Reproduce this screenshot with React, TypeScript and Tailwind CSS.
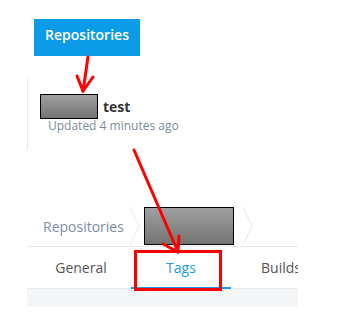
import React from "react";

function Chevron() {
  return (
    <svg width="12" height="40" viewBox="0 0 12 40" className="shrink-0">
      <polyline points="1,0 10,19 1,38" fill="none" stroke="#e6e8eb" strokeWidth="1" />
    </svg>
  );
}

function Redacted({ w, h }: { w: number; h: number }) {
  return (
    <div
      className="shrink-0 border border-black bg-gradient-to-b from-[#a0a0a0] to-[#747474]"
      style={{ width: w, height: h }}
    />
  );
}

export default function App() {
  return (
    <div
      className="relative w-[343px] h-[334px] bg-white overflow-hidden"
      style={{ fontFamily: '"Open Sans", "Liberation Sans", sans-serif' }}
    >
      <div className="pt-[19px]">
        <div className="ml-[34px] w-[106px] h-[37px] pb-[6px] bg-[#0c9be6] flex items-center justify-center text-white text-[14px] font-semibold">
          Repositories
        </div>

        <div className="mt-[21px] ml-[27px] h-[73px] border-l border-[#e8e8e8] pl-[12px] pt-[17px]">
          <div className="flex items-center h-[25px]">
            <Redacted w={58} h={25} />
            <span className="ml-[5px] text-[14px] font-bold text-[#333]">test</span>
          </div>
          <div className="ml-[8px] -mt-[1px] text-[12px] leading-[16px] text-[#7b8b9c]">
            Updated 4 minutes ago
          </div>
        </div>

        <div className="mt-[57px] ml-[27px] w-[271px] overflow-hidden">
          <div className="flex items-center h-[40px] border-b border-[#e6e8eb]">
            <span className="pl-[16px] pr-[5px] text-[14px] text-[#7b8fa3]">Repositories</span>
            <Chevron />
            <div className="ml-[3px] mr-[8px] self-start">
              <Redacted w={90} h={38} />
            </div>
            <Chevron />
          </div>
          <div className="flex h-[42px] pl-[4px] border-b border-[#e6e8eb]">
            <div className="w-[100px] shrink-0 flex items-center justify-center text-[14px] text-[#555]">
              General
            </div>
            <div className="relative w-[100px] shrink-0 flex items-center justify-center text-[14px] text-[#1a9ae6]">
              Tags
              <div className="absolute left-0 right-0 -bottom-[1px] h-[2px] bg-[#1a9ae6]" />
            </div>
            <div className="w-[100px] shrink-0 flex items-center justify-center text-[14px] text-[#555]">
              Builds
            </div>
          </div>
          <div className="h-[18px] bg-[#f4f5f7]" />
        </div>
      </div>

      <div className="absolute left-[134px] top-[250px] w-[88px] h-[41px] border-[3px] border-[#ff0000]" />

      <svg className="absolute left-0 top-0" width="343" height="334" viewBox="0 0 343 334">
        <g stroke="#ff0000" strokeWidth="3" fill="none" strokeLinecap="round">
          <line x1="88" y1="57" x2="83" y2="91" />
          <line x1="77" y1="76" x2="83" y2="91" />
          <line x1="93" y1="77" x2="83" y2="91" />
          <line x1="134" y1="150" x2="178" y2="252" />
          <line x1="163" y1="244" x2="178" y2="252" />
          <line x1="179" y1="236" x2="178" y2="252" />
        </g>
      </svg>
    </div>
  );
}
